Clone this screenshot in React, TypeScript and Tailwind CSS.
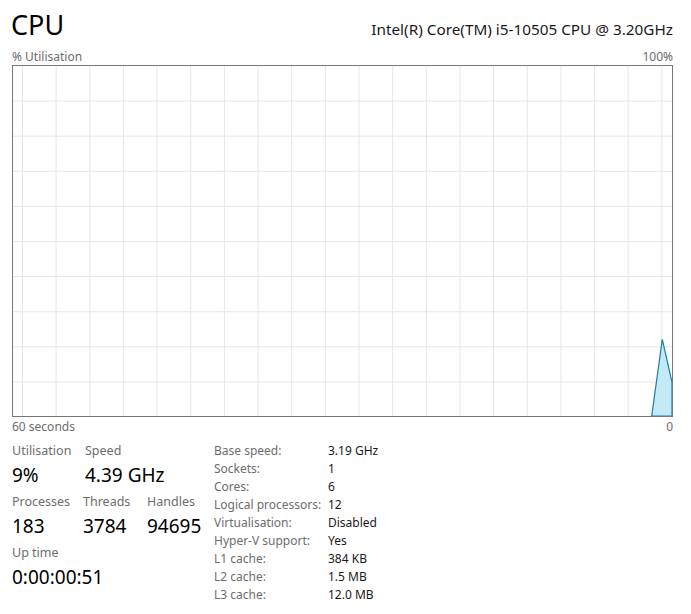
import React from "react";

const cols = Array.from({ length: 20 }, (_, i) => 9.5 + i * 33.65);
const rows = Array.from({ length: 9 }, (_, i) => (i + 1) * 35.1);

const specs = [
  ["Base speed:", "3.19 GHz"],
  ["Sockets:", "1"],
  ["Cores:", "6"],
  ["Logical processors:", "12"],
  ["Virtualisation:", "Disabled"],
  ["Hyper-V support:", "Yes"],
  ["L1 cache:", "384 KB"],
  ["L2 cache:", "1.5 MB"],
  ["L3 cache:", "12.0 MB"],
];

const Stat = ({ label, value, width }: { label: string; value: string; width: string }) => (
  <div className={`${width} shrink-0`}>
    <div className="text-[12.5px] leading-[16px] text-[#6d6d6d]">{label}</div>
    <div className="mt-[2px] text-[19px] leading-[28px] text-black">{value}</div>
  </div>
);

const App = () => {
  return (
    <div
      className="w-[691px] h-[614px] bg-white text-black overflow-hidden"
      style={{ fontFamily: "'Noto Sans', 'Open Sans', sans-serif" }}
    >
      <div className="ml-3 w-[661px]">
        <div className="h-[47px] pt-[10px] flex items-baseline justify-between">
          <span className="text-[27px] leading-[30px] -ml-px">CPU</span>
          <span className="text-[15.3px] leading-[20px] text-[#1a1a1a]">
            Intel(R) Core(TM) i5-10505 CPU @ 3.20GHz
          </span>
        </div>
        <div className="h-[18px] pt-[2px] flex justify-between text-[12px] leading-[16px] text-[#6d6d6d]">
          <span>% Utilisation</span>
          <span>100%</span>
        </div>
        <div className="w-[661px] h-[352px] border border-[#777777]">
          <svg width="659" height="350" viewBox="0 0 659 350" className="block">
            {cols.map((x) => (
              <line key={`c${x}`} x1={x} y1={0} x2={x} y2={350} stroke="#e6e6e6" strokeWidth={1} />
            ))}
            {rows.map((y) => (
              <line key={`r${y}`} x1={0} y1={y} x2={659} y2={y} stroke="#e6e6e6" strokeWidth={1} />
            ))}
            <polygon
              points="638.7,350 649.3,273.3 659,316.3 659,350"
              fill="#c5eaf7"
              stroke="#1a7fa8"
              strokeWidth={1.2}
            />
          </svg>
        </div>
        <div className="pt-[2px] h-[19px] flex justify-between text-[12px] leading-[16px] text-[#6d6d6d]">
          <span>60 seconds</span>
          <span>0</span>
        </div>

        <div className="mt-[7px] flex">
          <div className="w-[202px] shrink-0 flex flex-col gap-[5px]">
            <div className="flex">
              <Stat label="Utilisation" value="9%" width="w-[73px]" />
              <Stat label="Speed" value="4.39 GHz" width="w-[100px]" />
            </div>
            <div className="flex">
              <Stat label="Processes" value="183" width="w-[71px]" />
              <Stat label="Threads" value="3784" width="w-[64px]" />
              <Stat label="Handles" value="94695" width="w-[60px]" />
            </div>
            <div className="flex">
              <Stat label="Up time" value="0:00:00:51" width="w-[120px]" />
            </div>
          </div>
          <div className="-mt-px flex flex-col text-[12px] leading-[18px]">
            {specs.map(([k, v]) => (
              <div key={k} className="flex">
                <span className="w-[114px] text-[#6d6d6d]">{k}</span>
                <span className="text-[#1a1a1a]">{v}</span>
              </div>
            ))}
          </div>
        </div>
      </div>
    </div>
  );
};

export default App;
